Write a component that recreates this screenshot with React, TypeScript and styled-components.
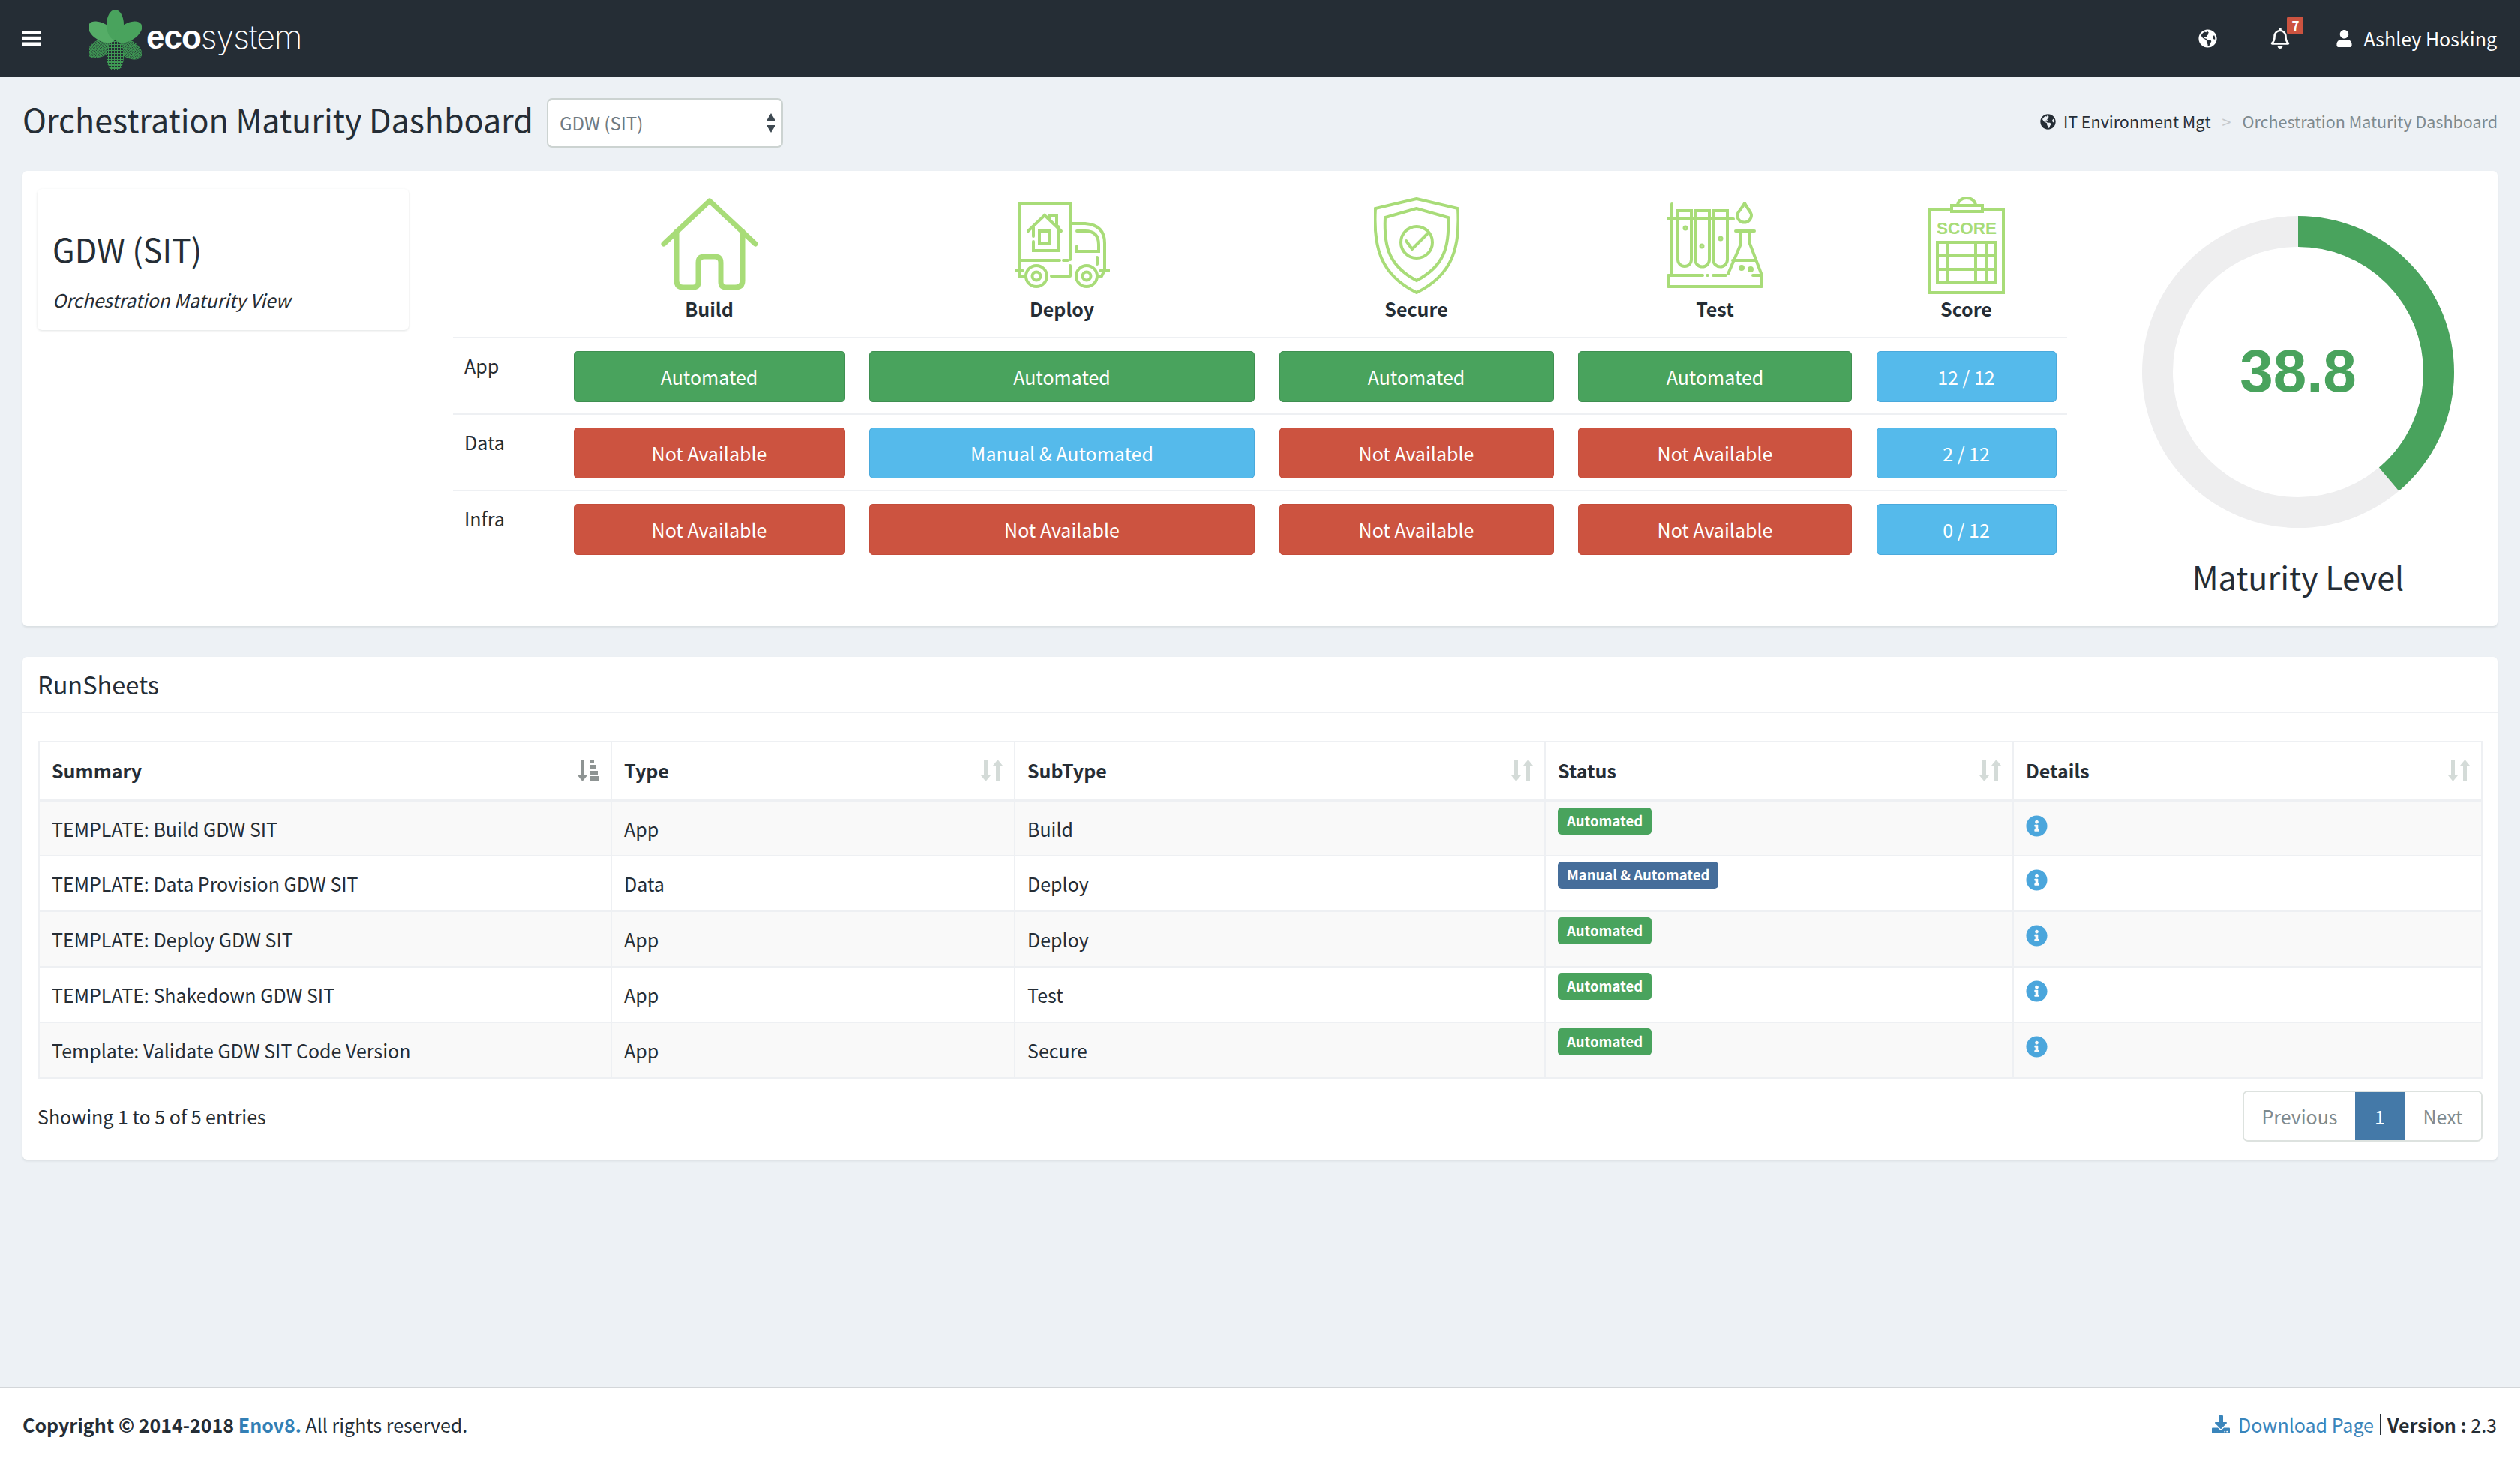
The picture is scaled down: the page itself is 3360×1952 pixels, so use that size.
import styled, { createGlobalStyle } from 'styled-components'
import { FaDownload, FaGlobeAmericas, FaInfoCircle, FaRegBell, FaUser } from 'react-icons/fa'

const GlobalStyle = createGlobalStyle`
  * {
    box-sizing: border-box;
  }
  body {
    margin: 0;
    background: #edf1f5;
    color: #252d35;
    font-family: 'Noto Sans CJK SC', 'Noto Sans', sans-serif;
    font-size: 25px;
    line-height: 40px;
  }
`

const GREEN = '#49a35d'
const RED = '#cc5340'
const BLUE = '#55baeb'
const ICON = '#a8dc78'

type Tone = 'green' | 'red' | 'blue'
const tones: Record<Tone, string> = { green: GREEN, red: RED, blue: BLUE }
const toneBorders: Record<Tone, string> = { green: '#3f8f51', red: '#c44c3a', blue: '#4aa9dc' }

const matrix: { label: string; cells: [string, Tone][] }[] = [
  {
    label: 'App',
    cells: [
      ['Automated', 'green'],
      ['Automated', 'green'],
      ['Automated', 'green'],
      ['Automated', 'green'],
      ['12 / 12', 'blue'],
    ],
  },
  {
    label: 'Data',
    cells: [
      ['Not Available', 'red'],
      ['Manual & Automated', 'blue'],
      ['Not Available', 'red'],
      ['Not Available', 'red'],
      ['2 / 12', 'blue'],
    ],
  },
  {
    label: 'Infra',
    cells: [
      ['Not Available', 'red'],
      ['Not Available', 'red'],
      ['Not Available', 'red'],
      ['Not Available', 'red'],
      ['0 / 12', 'blue'],
    ],
  },
]

const runsheets = [
  ['TEMPLATE: Build GDW SIT', 'App', 'Build', 'Automated'],
  ['TEMPLATE: Data Provision GDW SIT', 'Data', 'Deploy', 'Manual & Automated'],
  ['TEMPLATE: Deploy GDW SIT', 'App', 'Deploy', 'Automated'],
  ['TEMPLATE: Shakedown GDW SIT', 'App', 'Test', 'Automated'],
  ['Template: Validate GDW SIT Code Version', 'App', 'Secure', 'Automated'],
]

function Logo() {
  const petals = [
    { angle: -118, fill: 'url(#dots)' },
    { angle: 122, fill: 'url(#dots)' },
    { angle: 180, fill: 'url(#dots)' },
    { angle: -58, fill: '#55ad67' },
    { angle: 0, fill: '#49a35d' },
    { angle: 58, fill: '#49a35d' },
  ]
  return (
    <svg width="70" height="80" viewBox="0 0 70 80">
      <defs>
        <pattern id="dots" width="2" height="2" patternUnits="userSpaceOnUse">
          <rect width="2" height="2" fill="#3f9a54" />
          <rect width="1" height="1" fill="#252d35" />
        </pattern>
      </defs>
      {petals.map((p) => (
        <ellipse key={p.angle} cx="34.5" cy="20" rx="11.5" ry="20" fill={p.fill} transform={`rotate(${p.angle} 34.5 41)`} />
      ))}
    </svg>
  )
}

function MenuIcon() {
  return (
    <svg width="24" height="20" viewBox="0 0 24 20" fill="#fff">
      <path d="M0 0h24v4.500H0ZM0 7.750h24v4.500H0ZM0 15.500h24V20H0Z" />
    </svg>
  )
}

function HouseIcon() {
  return (
    <svg width="132" height="130" viewBox="0 0 132 130" fill="none" stroke={ICON} strokeWidth="7" strokeLinecap="round">
      <path d="M5 63 66 6l61 57" strokeLinejoin="round" />
      <path d="M22 47v65q0 9 9 9h13q7 0 7-7V88q0-8 8-8h14q8 0 8 8v26q0 7 7 7h12q10 0 10-9V47" />
    </svg>
  )
}

function TruckIcon() {
  return (
    <svg width="127" height="114" viewBox="0 0 127 114" fill="none" stroke={ICON} strokeWidth="4" strokeLinecap="round">
      <path d="M6 88V2h68v74M74 84v14M7 77h53M65 77h6M49 98h25M74 28h20q26 2 26 26v36l-4 8h-6" />
      <path d="M83 38h11q18 0 18 18v9H83v-7" />
      <path d="M110 73v9M0 91h11M114 91h13M6 91v7h8" />
      <ellipse cx="29" cy="98" rx="14" ry="14" />
      <ellipse cx="29" cy="98" rx="5.5" ry="5.5" />
      <ellipse cx="96" cy="98" rx="14" ry="14" />
      <ellipse cx="96" cy="98" rx="5.5" ry="5.5" />
      <path d="M18 38 40 17l22 21M25 52v12h33V32M25 33v12M47 23v-6h9v15" />
      <rect x="33" y="38" width="14" height="17" />
    </svg>
  )
}

function ShieldIcon() {
  return (
    <svg width="114" height="129" viewBox="0 0 114 129" fill="none" stroke={ICON} strokeWidth="4">
      <path d="M57 2 2 15c-3 50 6 88 55 112 49-24 58-62 55-112Z" />
      <path d="M57 15 15 27c-2 40 6 65 42 84 36-19 44-44 42-84Z" />
      <circle cx="57" cy="60" r="21" />
      <path d="m43 58 8 11 20-20" strokeLinecap="round" />
    </svg>
  )
}

function LabIcon() {
  return (
    <svg width="130" height="114" viewBox="0 0 130 114" fill="none" stroke={ICON} strokeWidth="4" strokeLinecap="round">
      <path d="M7 2v95M1 22h88" />
      <path d="M15 11h18v65a9 9 0 0 1-18 0ZM38 11h19v65a9.5 9.5 0 0 1-19 0ZM62 11h19v65a9.500 9.500 0 0 1-19 0Z" />
      <path d="M104 0c4 8 9 12 9 16a9 9 0 0 1-19 0c0-4 6-8 10-16Z" transform="translate(0 1)" />
      <path d="M92 38h25M99 38v17L82 95M111 38v17l16 42M88 77h31" />
      <path d="M2 97h46M54 97h1M62 97h17M115 97h12v15H2V97" strokeLinejoin="round" />
      <circle cx="25" cy="34" r="1.500" />
      <circle cx="47" cy="58" r="1.500" />
      <circle cx="72" cy="48" r="1.500" />
      <circle cx="100" cy="87" r="2" />
      <circle cx="112" cy="89" r="2" />
    </svg>
  )
}

function ScoreIcon() {
  return (
    <svg width="102" height="129" viewBox="0 0 102 129" fill="none" stroke={ICON} strokeWidth="4">
      <path d="M31 16H2v111h98V16H72" />
      <rect x="31" y="11" width="41" height="8" />
      <path d="M39 11a12 10 0 0 1 24 0" />
      <text x="51" y="49" textAnchor="middle" fill={ICON} stroke="none" fontFamily="'Liberation Sans', sans-serif" fontWeight="700" fontSize="22" textLength="80" lengthAdjust="spacingAndGlyphs">
        SCORE
      </text>
      <rect x="12" y="60" width="78" height="54" />
      <path d="M12 78h78M12 96h78M25 60v54M63 60v54M77 60v54" />
    </svg>
  )
}

function SortIcon({ active }: { active?: boolean }) {
  if (active) {
    return (
      <svg width="29" height="29" viewBox="0 0 29 29" fill="#8e9493">
        <path d="M4 0h5v21h4l-6.500 8L0 21h4Z" />
        <path d="M16 0h6v5h-6ZM16 7h8v5h-8ZM16 15h11v5H16ZM16 22h13v6H16Z" />
      </svg>
    )
  }
  return (
    <svg width="29" height="29" viewBox="0 0 29 29" fill="#d4dbd8">
      <path d="M4 0h5v21h4l-6.500 8L0 21h4Z" />
      <path d="M20 29h5V8h4L22.500 0 16 8h4Z" />
    </svg>
  )
}

export default function App() {
  const radius = 187.5
  const circumference = 2 * Math.PI * radius
  const score = 38.8

  return (
    <Page>
      <GlobalStyle />
      <Navbar>
        <MenuButton>
          <MenuIcon />
        </MenuButton>
        <Brand>
          <Logo />
          <BrandText>
            <b>eco</b>
            <span>system</span>
          </BrandText>
        </Brand>
        <NavRight>
          <FaGlobeAmericas size={25} />
          <BellWrap>
            <FaRegBell size={28} />
            <Badge7>7</Badge7>
          </BellWrap>
          <UserName>
            <FaUser size={23} />
            Ashley Hosking
          </UserName>
        </NavRight>
      </Navbar>

      <Main>
        <PageHead>
          <Title>Orchestration Maturity Dashboard</Title>
          <SelectBox>
            GDW (SIT)
            <svg width="14" height="26" viewBox="0 0 14 26" fill="#3f4a52">
              <path d="M7 0l6 10H1ZM7 26 1 16h12Z" />
            </svg>
          </SelectBox>
          <Breadcrumb>
            <FaGlobeAmericas size={21} />
            <span>IT Environment Mgt</span>
            <Sep>&gt;</Sep>
            <Current>Orchestration Maturity Dashboard</Current>
          </Breadcrumb>
        </PageHead>

        <MaturityCard>
          <SideBox>
            <SideTitle>GDW (SIT)</SideTitle>
            <SideSub>Orchestration Maturity View</SideSub>
          </SideBox>

          <Matrix>
            <MatrixHead>
              <span />
              <HeadCell>
                <IconSlot>
                  <HouseIcon />
                </IconSlot>
                Build
              </HeadCell>
              <HeadCell>
                <IconSlot>
                  <TruckIcon />
                </IconSlot>
                Deploy
              </HeadCell>
              <HeadCell>
                <IconSlot>
                  <ShieldIcon />
                </IconSlot>
                Secure
              </HeadCell>
              <HeadCell>
                <IconSlot>
                  <LabIcon />
                </IconSlot>
                Test
              </HeadCell>
              <HeadCell>
                <IconSlot>
                  <ScoreIcon />
                </IconSlot>
                Score
              </HeadCell>
            </MatrixHead>
            {matrix.map((row) => (
              <MatrixRow key={row.label}>
                <RowLabel>{row.label}</RowLabel>
                {row.cells.map(([text, tone], i) => (
                  <StateButton key={i} $tone={tone}>
                    {text}
                  </StateButton>
                ))}
              </MatrixRow>
            ))}
          </Matrix>

          <Gauge>
            <svg width="416" height="416" viewBox="0 0 416 416" fill="none">
              <circle cx="208" cy="208" r={radius} stroke="#eeeeef" strokeWidth="41" />
              <circle
                cx="208"
                cy="208"
                r={radius}
                stroke={GREEN}
                strokeWidth="41"
                strokeDasharray={`${(circumference * score) / 100} ${circumference}`}
                transform="rotate(-90 208 208)"
              />
              <GaugeValue x="208" y="234" textAnchor="middle">
                {score}
              </GaugeValue>
            </svg>
            <GaugeLabel>Maturity Level</GaugeLabel>
          </Gauge>
        </MaturityCard>

        <RunCard>
          <RunTitle>RunSheets</RunTitle>
          <RunTable>
            <colgroup>
              <col width="763" />
              <col width="538" />
              <col width="707" />
              <col width="624" />
              <col width="625" />
            </colgroup>
            <thead>
              <tr>
                {['Summary', 'Type', 'SubType', 'Status', 'Details'].map((h, i) => (
                  <Th key={h}>
                    <ThInner>
                      {h}
                      <SortIcon active={i === 0} />
                    </ThInner>
                  </Th>
                ))}
              </tr>
            </thead>
            <tbody>
              {runsheets.map((r, i) => (
                <Row key={r[0]} $odd={i % 2 === 0}>
                  <Td>{r[0]}</Td>
                  <Td>{r[1]}</Td>
                  <Td>{r[2]}</Td>
                  <BadgeCell>
                    <StatusBadge $manual={r[3] !== 'Automated'}>{r[3]}</StatusBadge>
                  </BadgeCell>
                  <BadgeCell>
                    <InfoIcon size={29} />
                  </BadgeCell>
                </Row>
              ))}
            </tbody>
          </RunTable>
          <TableFoot>
            <span>Showing 1 to 5 of 5 entries</span>
            <Pager>
              <PageLink $w={148}>Previous</PageLink>
              <PageLink $w={66} $active>
                1
              </PageLink>
              <PageLink $w={102}>Next</PageLink>
            </Pager>
          </TableFoot>
        </RunCard>
      </Main>

      <Footer>
        <div>
          <b>Copyright © 2014-2018 </b>
          <FooterBrand>Enov8.</FooterBrand> All rights reserved.
        </div>
        <FooterRight>
          <DownloadLink>
            <FaDownload size={24} /> Download Page
          </DownloadLink>
          <Bar />
          <b>Version : </b>2.3
        </FooterRight>
      </Footer>
    </Page>
  )
}

const Page = styled.div`
  min-height: 1952px;
  display: flex;
  flex-direction: column;
`

const Navbar = styled.header`
  height: 102px;
  background: #252d35;
  color: #fff;
  display: flex;
  align-items: center;
  padding: 0 31px 0 30px;
`

const MenuButton = styled.div`
  display: flex;
  width: 89px;
`

const Brand = styled.div`
  display: flex;
  align-items: center;
  gap: 6px;
  margin-top: 4px;
`

const BrandText = styled.div`
  font-family: 'Liberation Sans', sans-serif;
  font-size: 44px;
  line-height: 50px;
  letter-spacing: -1px;
  margin-top: -8px;

  b {
    font-weight: 700;
  }
  span {
    font-family: Inter, sans-serif;
    font-weight: 200;
    font-size: 43px;
  }
`

const NavRight = styled.div`
  margin-left: auto;
  display: flex;
  align-items: center;
`

const BellWrap = styled.div`
  position: relative;
  display: flex;
  margin: 0 60px 0 70px;
`

const Badge7 = styled.span`
  position: absolute;
  top: -15px;
  right: -17px;
  width: 22px;
  height: 24px;
  background: ${RED};
  border-radius: 3px;
  font-size: 17px;
  font-weight: 700;
  line-height: 24px;
  text-align: center;
`

const UserName = styled.div`
  display: flex;
  align-items: center;
  gap: 14px;
`

const Main = styled.main`
  padding: 29px 30px 0;
`

const PageHead = styled.div`
  display: flex;
  align-items: center;
  height: 66px;
`

const Title = styled.h1`
  margin: -13px 0 0 0;
  font-size: 43px;
  font-weight: 400;
  line-height: 60px;
`

const SelectBox = styled.div`
  width: 315px;
  height: 66px;
  margin-left: 18px;
  padding: 0 7px 0 15px;
  display: flex;
  align-items: center;
  justify-content: space-between;
  background: #fff;
  border: 2px solid #ccd3d1;
  border-radius: 7px;
  color: #6f7a82;
  font-size: 24px;
`

const Breadcrumb = styled.div`
  margin: -4px 0 0 auto;
  display: flex;
  align-items: center;
  font-size: 21.5px;

  svg {
    margin-right: 10px;
  }
`

const Sep = styled.span`
  color: #c5c9cc;
  margin: 0 15px;
`

const Current = styled.span`
  color: #7f8a8e;
`

const Card = styled.section`
  background: #fff;
  border-radius: 6px;
  box-shadow: 0 2px 3px rgba(40, 60, 60, 0.1);
`

const MaturityCard = styled(Card)`
  margin-top: 31px;
  height: 607px;
  display: flex;
  align-items: flex-start;
`

const SideBox = styled.div`
  width: 495px;
  height: 188px;
  margin: 24px 0 0 20px;
  padding: 54px 20px 0;
  border-radius: 6px;
  box-shadow: 0 1px 3px rgba(40, 60, 60, 0.14);
  flex-shrink: 0;
`

const SideTitle = styled.div`
  font-size: 43px;
  line-height: 50px;
`

const SideSub = styled.div`
  margin-top: 27px;
  font-size: 24.5px;
  font-style: italic;
  line-height: 34px;
`

const Matrix = styled.div`
  width: 2152px;
  margin: 34px 0 0 59px;
  flex-shrink: 0;
`

const columns = `
  display: grid;
  grid-template-columns: 128px 362px 514px 366px 365px 240px;
  column-gap: 32.5px;
`

const MatrixHead = styled.div`
  ${columns}
  height: 189px;
  border-bottom: 2px solid #eef0f3;
`

const HeadCell = styled.div`
  display: flex;
  flex-direction: column;
  align-items: center;
  font-weight: 700;
  line-height: 34px;
`

const IconSlot = styled.div`
  height: 130px;
  margin-bottom: 2px;
  display: flex;
  align-items: center;
`

const MatrixRow = styled.div`
  ${columns}
  height: 102px;
  padding-top: 17px;
  border-bottom: 2px solid #eef0f3;

  &:last-child {
    border-bottom: 0;
  }
`

const RowLabel = styled.div`
  padding-left: 15px;
  line-height: 38px;
`

const StateButton = styled.div<{ $tone: Tone }>`
  height: 68px;
  display: flex;
  align-items: center;
  justify-content: center;
  background: ${(p) => tones[p.$tone]};
  border: 1px solid ${(p) => toneBorders[p.$tone]};
  color: #fff;
  border-radius: 5px;
`

const Gauge = styled.div`
  width: 416px;
  margin: 60px 0 0 100px;
  flex-shrink: 0;
`

const GaugeValue = styled.text`
  fill: ${GREEN};
  font-family: 'Liberation Sans', sans-serif;
  font-size: 80px;
  font-weight: 700;
`

const GaugeLabel = styled.div`
  margin-top: 30px;
  text-align: center;
  font-size: 43px;
  line-height: 50px;
  white-space: nowrap;
`

const RunCard = styled(Card)`
  margin-top: 41px;
  padding-bottom: 24px;
`

const RunTitle = styled.h2`
  margin: 0 0 37px;
  height: 75px;
  padding-left: 20px;
  font-size: 32.5px;
  font-weight: 400;
  line-height: 72px;
  border-bottom: 2px solid #eef0f3;
`

const RunTable = styled.table`
  width: 3257px;
  margin-left: 21px;
  table-layout: fixed;
  border-collapse: collapse;
`

const Th = styled.th`
  height: 78px;
  padding: 0 15px 0 16px;
  text-align: left;
  border: 2px solid #eef0f3;
  border-bottom-width: 5px;
`

const ThInner = styled.div`
  display: flex;
  align-items: center;
  justify-content: space-between;
`

const Row = styled.tr<{ $odd: boolean }>`
  background: ${(p) => (p.$odd ? '#f9f9f9' : '#fff')};
`

const Td = styled.td`
  height: 74px;
  padding: 0 16px;
  border: 2px solid #eef0f3;
`

const BadgeCell = styled(Td)`
  vertical-align: top;
`

const StatusBadge = styled.span<{ $manual: boolean }>`
  display: inline-block;
  height: 36px;
  margin-top: 7px;
  padding: 0 12px;
  background: ${(p) => (p.$manual ? '#456d9a' : GREEN)};
  color: #fff;
  border-radius: 5px;
  font-size: 18.500px;
  font-weight: 700;
  line-height: 34px;
`

const InfoIcon = styled(FaInfoCircle)`
  display: block;
  margin-top: 17px;
  color: #4ba6dc;
`

const TableFoot = styled.div`
  display: flex;
  align-items: center;
  justify-content: space-between;
  padding: 16px 20px 0;
`

const Pager = styled.div`
  display: flex;
  height: 68px;
  border: 2px solid #dde2df;
  border-radius: 7px;
  overflow: hidden;
`

const PageLink = styled.div<{ $w: number; $active?: boolean }>`
  width: ${(p) => p.$w}px;
  display: flex;
  align-items: center;
  justify-content: center;
  background: ${(p) => (p.$active ? '#4479a8' : '#fff')};
  color: ${(p) => (p.$active ? '#fff' : '#7f8a8e')};
`

const Footer = styled.footer`
  margin-top: auto;
  height: 103px;
  padding: 28px 31px 0 30px;
  display: flex;
  justify-content: space-between;
  align-items: flex-start;
  background: #fff;
  border-top: 2px solid #d3d6d9;
`

const FooterBrand = styled.b`
  color: #337fb5;
`

const FooterRight = styled.div`
  display: flex;
  align-items: center;
  white-space: pre;
`

const DownloadLink = styled.span`
  display: flex;
  align-items: center;
  gap: 6px;
  color: #3a85bb;
`

const Bar = styled.span`
  width: 2px;
  height: 28px;
  margin: 0 8px;
  background: #252d35;
`
